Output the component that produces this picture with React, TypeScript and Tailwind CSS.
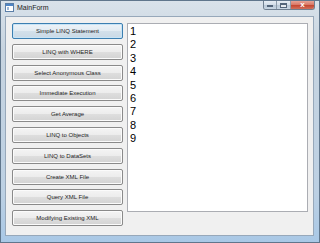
const items = [
  "Simple LINQ Statement",
  "LINQ with WHERE",
  "Select Anonymous Class",
  "Immediate Execution",
  "Get Average",
  "LINQ to Objects",
  "LINQ to DataSets",
  "Create XML File",
  "Query XML File",
  "Modifying Existing XML",
]

const lines = ["1", "2", "3", "4", "5", "6", "7", "8", "9"]

function FormIcon() {
  return (
    <svg width="9" height="9" viewBox="0 0 9 9">
      <rect x="0.5" y="0.5" width="8" height="8" fill="#ffffff" stroke="#5b7fa8" />
      <rect x="1" y="1" width="7" height="2" fill="#4f86c6" />
      <rect x="2" y="4" width="2" height="3" fill="#9db8d8" />
    </svg>
  )
}

function CaptionButtons() {
  return (
    <div className="flex h-[9px] mr-[4px] rounded-b-[3px] overflow-hidden border border-t-0 border-[#6f7f90]">
      <div className="w-[13px] h-full flex items-end justify-center pb-[2px] bg-[linear-gradient(to_bottom,#e6edf4_0%,#d2dde8_50%,#b9c8d7_50%,#c8d6e4_100%)] border-r border-[#8d9cab]">
        <div className="w-[6px] h-[2px] bg-white border border-[#53657a]" />
      </div>
      <div className="w-[14px] h-full flex items-center justify-center bg-[linear-gradient(to_bottom,#e6edf4_0%,#d2dde8_50%,#b9c8d7_50%,#c8d6e4_100%)] border-r border-[#8d9cab]">
        <div className="w-[7px] h-[5px] border border-[#53657a] border-t-2 bg-white/60" />
      </div>
      <div className="w-[23px] h-full flex items-center justify-center bg-[linear-gradient(to_bottom,#e7a295_0%,#d77563_50%,#c4432d_50%,#d0705c_100%)]">
        <span className="text-white text-[8px] leading-none font-bold font-['Liberation_Sans',sans-serif]">x</span>
      </div>
    </div>
  )
}

export default function App() {
  return (
    <div className="w-[320px] h-[243px] flex flex-col overflow-hidden border border-[#60768c] bg-[linear-gradient(to_bottom,#d9e2ea_0%,#c7d4e0_20%,#bcd0e3_80%,#a9c8e6_100%)] font-['Liberation_Sans',sans-serif]">
      <div className="h-[15px] flex items-start shrink-0">
        <div className="pl-[4px] pt-[2px] flex items-center gap-[3px]">
          <FormIcon />
          <span className="text-[7px] leading-[9px] text-[#1b1b1b]">MainForm</span>
        </div>
        <div className="flex-1" />
        <CaptionButtons />
      </div>
      <div className="ml-[4px] mr-[5px] h-[220px] bg-[#f0f0f0] border border-[#97a8ba] flex pl-[6px] pt-[6px] pr-[4px]">
        <div className="w-[111px] flex flex-col gap-[4.8px]">
          {items.map((label, i) => (
            <button
              key={label}
              className={
                i === 0
                  ? "h-[16px] rounded-[2px] border border-[#3c7fb1] shadow-[inset_0_0_0_1px_#c8e4f6] bg-[linear-gradient(to_bottom,#edf3f8_0%,#e2ebf2_50%,#d3e0ea_50%,#c9d9e6_100%)] text-[6px] leading-none text-[#1e1e1e] font-['Liberation_Sans',sans-serif]"
                  : "h-[16px] rounded-[2px] border border-[#8a8a8a] shadow-[inset_0_0_0_1px_#fbfbfb] bg-[linear-gradient(to_bottom,#f4f4f4_0%,#ececec_50%,#dedede_50%,#d3d3d3_100%)] text-[6px] leading-none text-[#1e1e1e] font-['Liberation_Sans',sans-serif]"
              }
            >
              {label}
            </button>
          ))}
        </div>
        <div className="ml-[4px] w-[181px] h-[189px] bg-white border border-[#abadb3] pl-[2px] pt-[1px]">
          {lines.map((n) => (
            <div key={n} className="text-[11px] leading-[13.4px] text-black">
              {n}
            </div>
          ))}
        </div>
      </div>
    </div>
  )
}
